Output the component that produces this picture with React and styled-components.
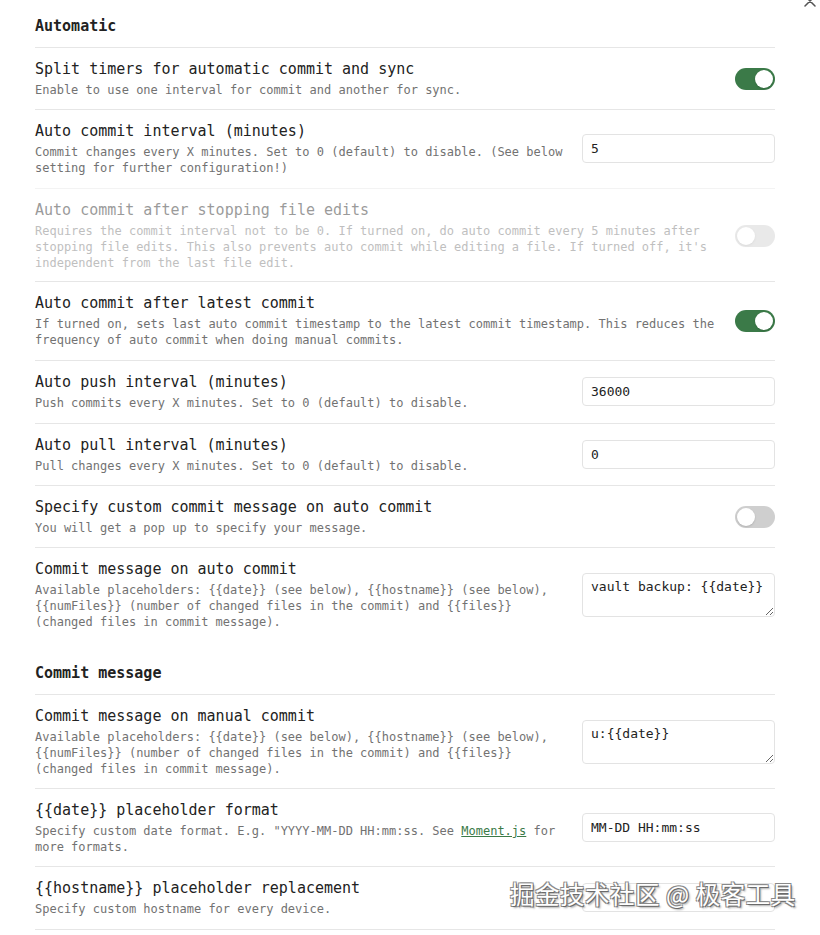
import React from 'react';
import styled, { createGlobalStyle } from 'styled-components';

const GlobalStyle = createGlobalStyle`
  html, body {
    margin: 0;
    padding: 0;
    background: #ffffff;
  }
  body {
    font-family: "DejaVu Sans Mono", "Liberation Mono", monospace;
    color: #222222;
  }
`;

const Page = styled.div`
  position: relative;
  width: 820px;
  height: 935px;
  overflow: hidden;
  background: #ffffff;
`;

const Content = styled.div`
  width: 740px;
  padding: 4px 0 0 35px;
`;

const CloseButton = styled.div`
  position: absolute;
  top: -7px;
  right: 3px;
  width: 14px;
  height: 14px;
  color: #555;
`;

const Heading = styled.div`
  font-size: 15px;
  line-height: 20px;
  font-weight: bold;
  color: #222;
  padding: ${(p) => (p.first ? '12px' : '22px')} 0 11px;
`;

const Row = styled.div`
  display: flex;
  align-items: center;
  border-top: 1px solid #e6e6e6;
  padding: 11px 0 ${(p) => p.pb || 11}px;
  opacity: ${(p) => (p.disabled ? 0.45 : 1)};
`;

const Info = styled.div`
  flex: 1 1 auto;
  margin-right: 16px;
`;

const Title = styled.div`
  font-size: 15px;
  line-height: 20px;
  color: #222;
`;

const Desc = styled.div`
  font-size: 12px;
  line-height: 16px;
  color: #727272;
  margin-top: 3px;
`;

const Link = styled.a`
  color: #3b7a48;
  text-decoration: underline;
`;

const Control = styled.div`
  flex: 0 0 auto;
  display: flex;
  justify-content: flex-end;
`;

const Toggle = styled.div`
  position: relative;
  width: 40px;
  height: 22px;
  border-radius: 11px;
  background: ${(p) => (p.on ? '#3b7a48' : '#cfcfcf')};
  &::after {
    content: '';
    position: absolute;
    top: 2px;
    left: ${(p) => (p.on ? '20px' : '2px')};
    width: 18px;
    height: 18px;
    border-radius: 50%;
    background: #ffffff;
    box-shadow: 0 1px 2px rgba(0, 0, 0, 0.15);
  }
`;

const TextInput = styled.input`
  box-sizing: border-box;
  width: 193px;
  height: 29px;
  padding: 0 8px;
  border: 1px solid #e3e3e3;
  border-radius: 4px;
  font-family: "DejaVu Sans Mono", "Liberation Mono", monospace;
  font-size: 13px;
  color: #222;
  background: #fff;
  outline: none;
`;

const TextArea = styled.textarea`
  box-sizing: border-box;
  width: 193px;
  height: 44px;
  padding: 4px 8px;
  border: 1px solid #e3e3e3;
  border-radius: 4px;
  font-family: "DejaVu Sans Mono", "Liberation Mono", monospace;
  font-size: 13px;
  line-height: 18px;
  color: #222;
  background: #fff;
  outline: none;
  resize: vertical;
`;

const Watermark = styled.div`
  position: absolute;
  left: 510px;
  top: 878px;
  font-family: "Noto Sans CJK SC", "Noto Sans", sans-serif;
  font-size: 24.5px;
  line-height: 32px;
  color: #ffffff;
  letter-spacing: 0.5px;
  text-shadow: 1px 1px 0 #6a6a6a, -1px -1px 0 #8a8a8a, 1px -1px 0 #8a8a8a, -1px 1px 0 #8a8a8a, 2px 2px 2px rgba(0,0,0,0.35);
`;

const rows = [
  { heading: 'Automatic' },
  {
    title: 'Split timers for automatic commit and sync',
    desc: 'Enable to use one interval for commit and another for sync.',
    toggle: true,
  },
  {
    title: 'Auto commit interval (minutes)',
    desc: 'Commit changes every X minutes. Set to 0 (default) to disable. (See below setting for further configuration!)',
    input: '5',
    pb: 12,
  },
  {
    title: 'Auto commit after stopping file edits',
    desc: "Requires the commit interval not to be 0. If turned on, do auto commit every 5 minutes after stopping file edits. This also prevents auto commit while editing a file. If turned off, it's independent from the last file edit.",
    toggle: false,
    disabled: true,
    pb: 10,
  },
  {
    title: 'Auto commit after latest commit',
    desc: 'If turned on, sets last auto commit timestamp to the latest commit timestamp. This reduces the frequency of auto commit when doing manual commits.',
    toggle: true,
    pb: 12,
  },
  {
    title: 'Auto push interval (minutes)',
    desc: 'Push commits every X minutes. Set to 0 (default) to disable.',
    input: '36000',
    pb: 12,
  },
  {
    title: 'Auto pull interval (minutes)',
    desc: 'Pull changes every X minutes. Set to 0 (default) to disable.',
    input: '0',
  },
  {
    title: 'Specify custom commit message on auto commit',
    desc: 'You will get a pop up to specify your message.',
    toggle: false,
  },
  {
    title: 'Commit message on auto commit',
    desc: 'Available placeholders: {{date}} (see below), {{hostname}} (see below), {{numFiles}} (number of changed files in the commit) and {{files}} (changed files in commit message).',
    area: 'vault backup: {{date}}',
  },
  { heading: 'Commit message' },
  {
    title: 'Commit message on manual commit',
    desc: 'Available placeholders: {{date}} (see below), {{hostname}} (see below), {{numFiles}} (number of changed files in the commit) and {{files}} (changed files in commit message).',
    area: 'u:{{date}}',
  },
  {
    title: '{{date}} placeholder format',
    desc: (
      <>
        Specify custom date format. E.g. "YYYY-MM-DD HH:mm:ss. See <Link>Moment.js</Link> for more formats.
      </>
    ),
    input: 'MM-DD HH:mm:ss',
  },
  {
    title: '{{hostname}} placeholder replacement',
    desc: 'Specify custom hostname for every device.',
    input: '',
    pb: 12,
  },
];

function SettingRow({ row }) {
  return (
    <Row disabled={row.disabled} pb={row.pb}>
      <Info>
        <Title>{row.title}</Title>
        <Desc>{row.desc}</Desc>
      </Info>
      <Control>
        {row.toggle !== undefined && <Toggle on={row.toggle ? 1 : 0} />}
        {row.input !== undefined && <TextInput defaultValue={row.input} />}
        {row.area !== undefined && <TextArea defaultValue={row.area} />}
      </Control>
    </Row>
  );
}

export default function App() {
  return (
    <Page>
      <GlobalStyle />
      <CloseButton>
        <svg width="14" height="14" viewBox="0 0 14 14" fill="none" stroke="currentColor" strokeWidth="1.5" strokeLinecap="round">
          <path d="M2 2 L12 12 M12 2 L2 12" />
        </svg>
      </CloseButton>
      <Content>
        {rows.map((row, i) => (row.heading ? (
          <Heading key={row.heading} first={i === 0 ? 1 : 0}>{row.heading}</Heading>
        ) : (
          <SettingRow key={row.title} row={row} />
        )))}
        <Row />
      </Content>
      <Watermark>掘金技术社区 @ 极客工具</Watermark>
    </Page>
  );
}
